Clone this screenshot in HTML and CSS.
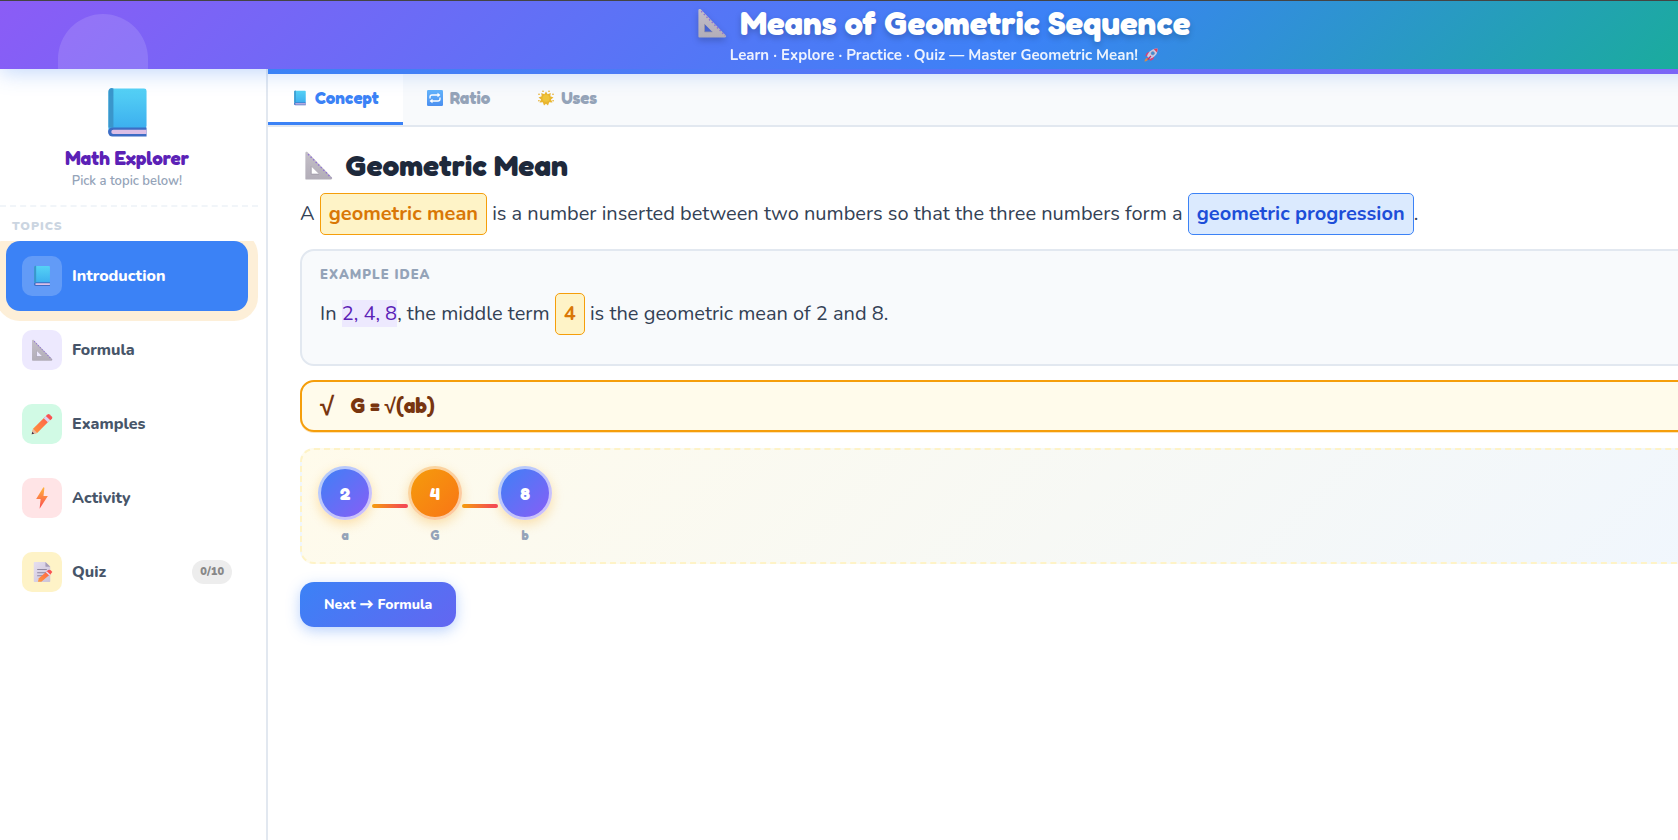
FILE: index.html
```html
<!DOCTYPE html>
<html lang="en">
<head>
<meta charset="utf-8">
<title>Means of Geometric Sequence</title>
<link rel="stylesheet" href="styles.css">
</head>
<body>
<svg class="defs" aria-hidden="true">
  <defs>
    <linearGradient id="gBook" x1="0" y1="0" x2="0" y2="1"><stop offset="0" stop-color="#55d2f5"/><stop offset="1" stop-color="#38a9ee"/></linearGradient>
    <linearGradient id="gRule" x1="0" y1="0" x2="0" y2="1"><stop offset="0" stop-color="#c4bfc8"/><stop offset="1" stop-color="#b2adb8"/></linearGradient>
    <linearGradient id="gPencil" x1="1" y1="0" x2="0" y2="1"><stop offset="0" stop-color="#ff5a4a"/><stop offset="1" stop-color="#ff9a3c"/></linearGradient>
    <linearGradient id="gBolt" x1="0" y1="0" x2="0" y2="1"><stop offset="0" stop-color="#ffb43c"/><stop offset="1" stop-color="#fb4b50"/></linearGradient>
    <linearGradient id="gBlue" x1="0" y1="0" x2="0" y2="1"><stop offset="0" stop-color="#63b4fb"/><stop offset="1" stop-color="#4a8ff0"/></linearGradient>
    <linearGradient id="gPage" x1="0" y1="0" x2="1" y2="1"><stop offset="0" stop-color="#e6dff0"/><stop offset="1" stop-color="#cbc3d8"/></linearGradient>
  </defs>
  <symbol id="book" viewBox="0 0 32 32">
    <path d="M6 1.500h20A1.500 1.500 0 0 1 27.500 3V24L26 29.500H7A2.500 2.500 0 0 1 4.500 27V3.500A2 2 0 0 1 6 1.500z" fill="url(#gBook)"/>
    <path d="M4.500 3.500A2 2 0 0 1 7.500 1.500V25h-3z" fill="#3a96cb"/>
    <path d="M7 25h20.500v5.500H7a2.700 2.700 0 0 1 0-5.500z" fill="#3d6cc4"/>
    <path d="M7.500 26.400h20V29h-20a1.300 1.300 0 0 1 0-2.600z" fill="#dcbfe6"/>
  </symbol>
  <symbol id="ruler" viewBox="0 0 32 32">
    <path fill-rule="evenodd" d="M1.500 2.200C1.500 1 3 .5 4 1.400L30.600 29c1 1 .4 2.500-1 2.500H2.500a1 1 0 0 1-1-1zM8 17v8.500h8.500z" fill="url(#gRule)"/>
    <path d="M8 17v8.500h8.500" fill="none" stroke="#9a94a3" stroke-width=".8"/>
    <path d="M4.500 3.500L30 29.500" stroke="#8f6fd8" stroke-width="1.500" stroke-dasharray="1.600 2.400"/>
  </symbol>
  <symbol id="pencil" viewBox="0 0 32 32">
    <path d="M1 31l2-8L21 5l6 6L9 29z" fill="url(#gPencil)"/>
    <path d="M1 31l2-8 6 6z" fill="#e9b9a0"/>
    <path d="M1 31l.9-3.600 2.700 2.700z" fill="#3f2c44"/>
    <path d="M18.500 7.500L22 4l6 6-3.500 3.500z" fill="#ded3f0"/>
    <path d="M21.500 4.500L24 2q1.500-1.200 3 0l3.500 3.500q1.200 1.500 0 3L28 10.500z" fill="#fa5252"/>
  </symbol>
  <symbol id="bolt" viewBox="0 0 32 32"><path d="M18 .5L7.500 17.500H14L12.500 31.500 24.500 13H18.200L19.500 1z" fill="url(#gBolt)"/></symbol>
  <symbol id="memo" viewBox="0 0 32 32">
    <path d="M5 1.500h16l7 7v21a1 1 0 0 1-1 1H5a1 1 0 0 1-1-1v-27a1 1 0 0 1 1-1z" fill="url(#gPage)"/>
    <path d="M21 1.500v6a1 1 0 0 0 1 1h6z" fill="#a79db8"/>
    <path d="M9 12.500h14M9 17h14M9 21.500h9" stroke="#8f87a0" stroke-width="1.500"/>
    <path d="M10 30l1.500-5L24 14l5 4.500L15 30z" fill="url(#gPencil)"/>
    <path d="M22.500 15.500L25 13q3.500-1 6 3L28 19.500z" fill="#fa5252"/>
    <path d="M21.500 16.500l1.500-1.500 5 4.500-1.500 1.500z" fill="#e8dff5"/>
  </symbol>
  <symbol id="repeat" viewBox="0 0 32 32">
    <rect x="0" y="0" width="32" height="32" rx="2.500" fill="url(#gBlue)"/>
    <path d="M6 17v-3q0-4 4-4H24M26 15v3q0 4-4 4H8" fill="none" stroke="#fff" stroke-width="2.600"/>
    <path d="M21 5.500l6 4.500-6 4.500zM11 17.500L5 22l6 4.500z" fill="#fff"/>
  </symbol>
  <symbol id="sun" viewBox="0 0 32 32">
    <path d="M16 3l3.200 5.600 6.300-2.400-.9 6.300 6.400 2.500-5.200 4 3.200 6-6.600-.5L20 31l-4-3.500L12 31l-2.400-6.500-6.600.5 3.200-6L1 15l6.400-2.500-.9-6.300 6.300 2.400z" fill="#e9b52e"/>
    <circle cx="16" cy="16.500" r="7" fill="#efc43a"/>
    <g fill="#e4a91f"><circle cx="10" cy="2.500" r="1.600"/><circle cx="22" cy="2.500" r="1.600"/><circle cx="2" cy="8.500" r="1.600"/><circle cx="30" cy="8.500" r="1.600"/><circle cx="1.800" cy="21.500" r="1.600"/><circle cx="30.200" cy="21.500" r="1.600"/></g>
  </symbol>
  <symbol id="rocket" viewBox="0 0 32 32">
    <path d="M13 9q-8 0-10 10l8-1zM23 19q0 9-9 10l0-8z" fill="#e83a6b"/>
    <path d="M8 22q-6 1-7 9 8-1 8-6z" fill="#e98a3a"/>
    <path d="M31 1q-14 0-21 11-3 5-3 7l6 6q3-1 8-4Q32 14 31 1z" fill="#d9d3e6"/>
    <path d="M31 1q-5 0-9 1.500l7.500 7.500Q31 6 31 1z" fill="#f2384e"/>
    <circle cx="20" cy="12" r="4" fill="#3e8fd0" stroke="#8e86a3" stroke-width="1.200"/>
    <path d="M7 25l8-8 2 2-7 9z" fill="#d8285e"/>
  </symbol>
</svg>

<div class="app">
  <header class="hero">
    <h1 class="hero-title display"><svg class="icon hero-icon"><use href="#ruler"/></svg>Means of Geometric Sequence</h1>
    <p class="hero-sub">Learn · Explore · Practice · Quiz — Master Geometric Mean!<svg class="icon hero-rocket"><use href="#rocket"/></svg></p>
  </header>

  <div class="shell">
    <aside class="side">
      <div class="brand">
        <svg class="icon brand-icon"><use href="#book"/></svg>
        <div class="brand-name display">Math Explorer</div>
        <div class="brand-sub">Pick a topic below!</div>
      </div>
      <div class="side-label">TOPICS</div>
      <nav class="topics">
        <button class="topic active"><span class="chip chip-intro"><svg class="icon"><use href="#book"/></svg></span>Introduction</button>
        <button class="topic"><span class="chip chip-violet"><svg class="icon"><use href="#ruler"/></svg></span>Formula</button>
        <button class="topic"><span class="chip chip-green"><svg class="icon"><use href="#pencil"/></svg></span>Examples</button>
        <button class="topic"><span class="chip chip-red"><svg class="icon"><use href="#bolt"/></svg></span>Activity</button>
        <button class="topic"><span class="chip chip-yellow"><svg class="icon"><use href="#memo"/></svg></span>Quiz<span class="score">0/10</span></button>
      </nav>
    </aside>

    <main class="main">
      <div class="stripe"></div>
      <div class="tabs" role="tablist">
        <button class="tab display active" role="tab" aria-selected="true"><svg class="icon"><use href="#book"/></svg>Concept</button>
        <button class="tab display" role="tab" aria-selected="false"><svg class="icon"><use href="#repeat"/></svg>Ratio</button>
        <button class="tab display" role="tab" aria-selected="false"><svg class="icon"><use href="#sun"/></svg>Uses</button>
      </div>
      <section class="content">
        <h2 class="title display"><svg class="icon title-icon"><use href="#ruler"/></svg>Geometric Mean</h2>
        <p class="lead">A <span class="pill pill-amber">geometric mean</span> is a number inserted between two numbers so that the three numbers form a <span class="pill pill-blue">geometric progression</span>.</p>
        <div class="example">
          <div class="example-label">EXAMPLE IDEA</div>
          <p class="lead">In <span class="mark">2, 4, 8</span>, the middle term <span class="pill pill-amber">4</span> is the geometric mean of 2 and 8.</p>
        </div>
        <div class="formula"><span class="root root-lead">√</span><span class="display">G = <span class="root">√</span>(ab)</span></div>
        <div class="flow">
          <div class="node"><span class="ball display">2</span><span class="node-label display">a</span></div>
          <span class="link"></span>
          <div class="node"><span class="ball ball-mean display">4</span><span class="node-label display">G</span></div>
          <span class="link"></span>
          <div class="node"><span class="ball display">8</span><span class="node-label display">b</span></div>
        </div>
        <button class="next">Next → Formula</button>
      </section>
    </main>
  </div>
</div>
</body>
</html>
```

FILE: styles.css
```css
* { box-sizing: border-box; }
html { overflow: hidden; }
body {
  margin: 0;
  overflow: hidden;
  background: #fff;
  color: #334155;
  font-family: Nunito, Lato, sans-serif;
  font-size: 16px;
}
h1, h2, p { margin: 0; }
button { font: inherit; border: 0; background: none; cursor: pointer; }
.defs { position: absolute; width: 0; height: 0; }
.icon { display: block; flex: none; width: 22px; height: 22px; }
.display {
  font-family: "Fredoka One", Fredoka, "Baloo 2", Nunito, sans-serif;
  font-weight: 700;
}

/* the canvas is wider than the window and runs off its right edge */
.app { width: 112.5vw; min-height: 100vh; display: flex; flex-direction: column; }

.hero {
  position: relative;
  z-index: 2;
  height: 69px;
  display: flex;
  flex-direction: column;
  align-items: center;
  padding-top: 3px;
  border-top: 1px solid #444;
  background: linear-gradient(135deg, #8b5cf6 0%, #3b82f6 55%, #10b981 100%);
  box-shadow: 0 4px 20px rgba(59, 130, 246, .3);
  color: #fff;
}
.hero::before {
  content: "";
  position: absolute;
  left: 58px;
  top: 13px;
  width: 90px;
  height: 55px;
  border-radius: 45px 45px 0 0 / 45px 45px 0 0;
  background: rgba(255, 255, 255, .13);
}
.hero-title {
  display: flex;
  align-items: center;
  gap: 13px;
  font-size: 33px;
  line-height: 38px;
  text-shadow: 0 3px 6px rgba(0, 0, 0, .2);
}
.hero-icon { width: 30px; height: 30px; filter: drop-shadow(0 3px 3px rgba(0, 0, 0, .2)); }
.hero-sub {
  display: flex;
  align-items: center;
  gap: 6px;
  font-size: 15px;
  font-weight: 700;
  line-height: 26px;
  opacity: .9;
}
.hero-rocket { width: 14px; height: 14px; }

.shell { flex: 1; display: flex; }

.side { width: 268px; flex: none; border-right: 2px solid #e2e8f0; padding-right: 8px; }
.brand {
  display: flex;
  flex-direction: column;
  align-items: center;
  padding: 17px 4px 13px 0;
  border-bottom: 2px dashed #f1f5f9;
}
.brand-icon { width: 53px; height: 53px; }
.brand-name { color: #5b21b6; font-size: 19px; line-height: 24px; margin-top: 7px; }
.brand-sub { color: #94a3b8; font-size: 13px; font-weight: 600; line-height: 22px; }
.side-label {
  padding: 12px 12px 8px;
  color: #cbd5e1;
  font-size: 12px;
  font-weight: 900;
  line-height: 14px;
  letter-spacing: 1px;
}
.topics { display: flex; flex-direction: column; gap: 4px; padding: 0 10px 10px 6px; overflow: hidden; }
.topic {
  display: flex;
  align-items: center;
  gap: 10px;
  padding: 15px 16px;
  border-radius: 14px;
  color: #475569;
  font-size: 16px;
  font-weight: 800;
  text-align: left;
}
.topic.active { background: #3b82f6; color: #fff; box-shadow: 0 0 0 10px rgba(245, 158, 11, .16); }
.chip { width: 40px; height: 40px; border-radius: 10px; display: grid; place-items: center; }
.chip-intro { background: rgba(255, 255, 255, .2); }
.chip-violet { background: #ede9fe; }
.chip-green { background: #d1fae5; }
.chip-red { background: #ffe4e6; }
.chip-yellow { background: #fef3c7; }
.score {
  margin-left: auto;
  padding: 0 8px;
  border-radius: 12px;
  background: #ededed;
  color: #888;
  font-size: 11px;
  font-weight: 900;
  line-height: 24px;
}

.main { flex: 1; min-width: 0; }
.stripe { position: relative; z-index: 3; height: 5px; background: linear-gradient(90deg, #3b82f6, #8b5cf6 110%); }
.tabs { display: flex; background: #f8fafc; border-bottom: 2px solid #e2e8f0; }
.tab {
  display: flex;
  align-items: center;
  gap: 7px;
  padding: 0 24px;
  border-bottom: 3px solid transparent;
  color: #94a3b8;
  font-size: 17px;
  line-height: 48px;
}
.tab .icon { width: 16px; height: 16px; }
.tab.active { background: #fff; color: #3b82f6; border-bottom-color: #3b82f6; }

.content { display: flex; flex-direction: column; align-items: stretch; padding: 20px 32px; }
.title { display: flex; align-items: center; gap: 12px; color: #1e293b; font-size: 30px; line-height: 36px; padding-left: 4px; }
.title-icon { width: 29px; height: 29px; }
.lead { margin-top: 10px; font-size: 20px; line-height: 42px; }
.pill { display: inline-block; padding: 0 8px; border: 1px solid; border-radius: 5px; font-weight: 700; line-height: 40px; }
.pill-amber { background: #fef3c7; border-color: #f59e0b; color: #d97706; }
.pill-blue { background: #dbeafe; border-color: #3b82f6; color: #1d4ed8; }
.mark { background: #ede9fe; color: #5b21b6; }
.example {
  margin-top: 14px;
  padding: 15px 18px 28px;
  border: 2px solid #e2e8f0;
  border-radius: 14px;
  background: #f8fafc;
}
.example .lead { margin-top: 9px; padding-bottom: 1px; }
.example-label { color: #94a3b8; font-size: 13px; font-weight: 900; line-height: 18px; letter-spacing: 1px; }
.formula {
  display: flex;
  align-items: center;
  gap: 16px;
  margin-top: 14px;
  padding: 0 18px;
  border: 2px solid #f59e0b;
  border-radius: 14px;
  background: #fffbeb;
  box-shadow: 0 1px 0 rgba(245, 158, 11, .3);
  color: #78350f;
  font-size: 21px;
  line-height: 48px;
}
.root { font-family: "Liberation Sans", sans-serif; font-weight: 700; line-height: 1; }
.root-lead { font-size: 26px; }
.flow {
  display: flex;
  align-items: center;
  margin-top: 16px;
  padding: 16px;
  border: 2px dashed #fef3c7;
  border-radius: 14px;
  background: linear-gradient(135deg, #fffbeb, #eff6ff);
}
.node { display: flex; flex-direction: column; align-items: center; gap: 8px; }
.ball {
  width: 54px;
  height: 54px;
  border: 3px solid rgba(255, 255, 255, .6);
  border-radius: 50%;
  background: linear-gradient(135deg, #3b82f6, #8b5cf6) border-box;
  box-shadow: 0 4px 12px rgba(245, 158, 11, .3);
  color: #fff;
  font-size: 18px;
  line-height: 48px;
  text-align: center;
}
.ball-mean { background: linear-gradient(135deg, #f59e0b, #f97316) border-box; }
.node-label { color: #94a3b8; font-size: 13px; line-height: 14px; padding-bottom: 4px; }
.link { width: 36px; height: 4px; border-radius: 2px; background: linear-gradient(90deg, #f59e0b, #f43f5e); }
.next {
  align-self: flex-start;
  margin-top: 18px;
  padding: 0 24px;
  border-radius: 14px;
  background: linear-gradient(135deg, #3b82f6, #6366f1);
  box-shadow: 0 4px 14px rgba(59, 130, 246, .35);
  color: #fff;
  font-size: 14px;
  font-weight: 800;
  line-height: 45px;
}
```
